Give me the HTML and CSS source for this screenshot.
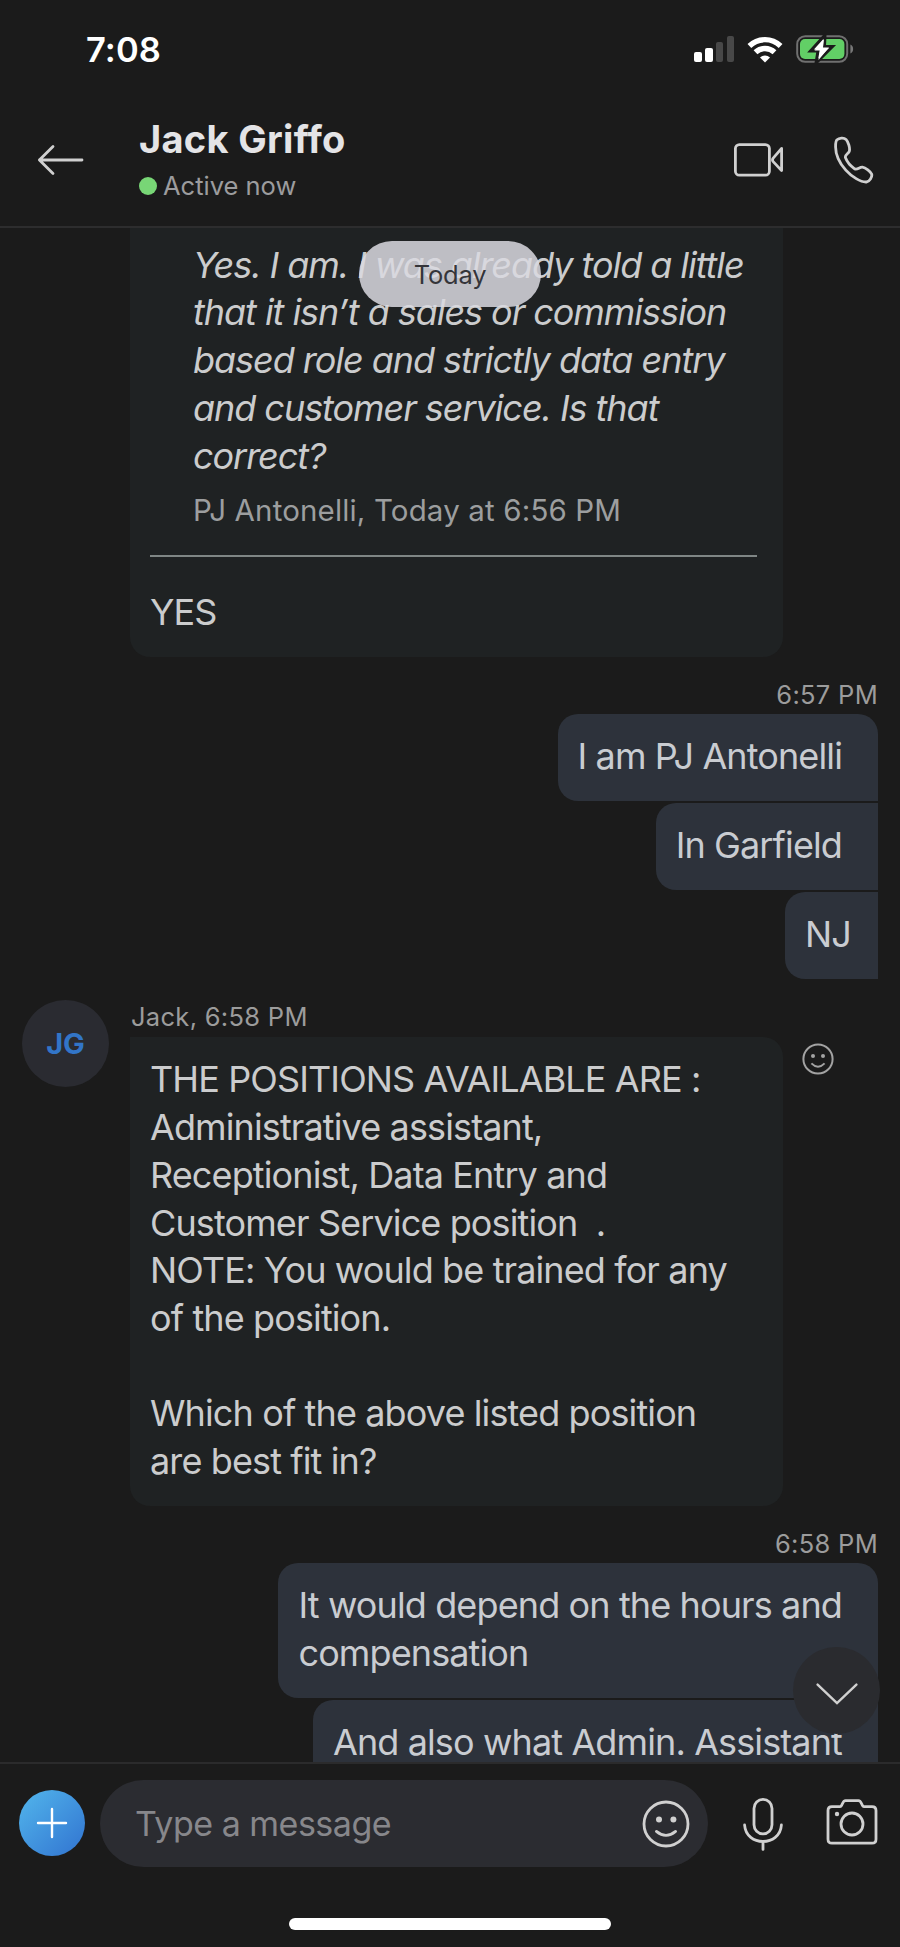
FILE: index.html
```html
<!DOCTYPE html>
<html lang="en">
<head>
    <meta charset="UTF-8">
    <meta name="viewport" content="width=device-width, initial-scale=1.0">
    <title>Jack Griffo</title>
    <link rel="stylesheet" href="styles.css">
</head>
<body>
    <div class="phone">
        <header class="header">
            <div class="status-bar">
                <span class="clock">7:08</span>
                <svg class="signal" width="41" height="26" viewBox="0 0 41 26">
                    <rect x="0" y="16" width="8" height="10" rx="2" fill="#fff"/>
                    <rect x="11" y="12" width="8" height="14" rx="2" fill="#fff"/>
                    <rect x="22" y="6" width="7" height="20" rx="2" fill="#484848"/>
                    <rect x="33" y="0" width="7" height="26" rx="2" fill="#484848"/>
                </svg>
                <svg class="wifi" width="36" height="27" viewBox="0 0 36 27" fill="none" stroke="#fff" stroke-width="5.4">
                    <path d="M2.4 10A22.4 22.4 0 0 1 33.6 10"/>
                    <path d="M8.5 16.3A13.6 13.6 0 0 1 27.5 16.3"/>
                    <path d="M13 21.5A7.3 7.3 0 0 1 23 21.5L18 26.4Z" fill="#fff" stroke="none"/>
                </svg>
                <svg class="battery" width="58" height="28" viewBox="0 0 58 28">
                    <rect x="1.2" y="1.2" width="50" height="25.6" rx="8" fill="none" stroke="#707070" stroke-width="2"/>
                    <rect x="4" y="4" width="44.4" height="20" rx="5" fill="#62cf66"/>
                    <path d="M54.4 9.5C58 11 58 17 54.4 18.5Z" fill="#777"/>
                    <path d="M29 0L14.5 16H22L20 28L36.5 11.5H28.5Z" fill="#fff" stroke="#1b1b1b" stroke-width="3"/>
                    <path d="M28 4L18.5 15.4H24.2L22.5 25L33 12.6H27Z" fill="#fff"/>
                </svg>
            </div>
            <div class="title-bar">
                <svg class="back" width="48" height="32" viewBox="0 0 48 32" fill="none" stroke="#d0d0d0" stroke-width="2.8" stroke-linecap="round" stroke-linejoin="round">
                    <path d="M45 16H2.4M16 2.4L2.4 16L16 29.6"/>
                </svg>
                <div class="contact">
                    <h1>Jack Griffo</h1>
                    <p><i class="dot"></i>Active now</p>
                </div>
                <svg class="video" width="50" height="34" viewBox="0 0 50 34" fill="none" stroke="#d0d0d0" stroke-width="2.8" stroke-linejoin="round">
                    <rect x="1.4" y="1.6" width="34" height="30.6" rx="4"/>
                    <path d="M47.6 5.4V27.6L39.2 18.6Q37.8 17 39.2 15.2Z"/>
                </svg>
                <svg class="call" width="40" height="48" viewBox="0 0 40 48" fill="none" stroke="#d0d0d0" stroke-width="2.8" stroke-linejoin="round">
                    <path d="M3 3.8C5 2 9.8 1.2 12 3.4C14.6 6.2 16 12 15.4 15C15 17.6 10.6 18.6 11.4 21.6C12.8 25.4 17 30.4 20.6 32.8C23.2 34.4 25.4 31 28.4 31.2C31.6 31.6 36.6 35.4 37.6 38C38.6 41 35.4 45.6 32.4 46C27 46.4 17.4 40.6 11.8 34.2C5.2 26.6 1.4 17.6 1.6 10.2C1.6 7.2 1.6 5 3 3.8Z"/>
                </svg>
            </div>
        </header>

        <main class="chat">
            <div class="bubble received first">
                <blockquote>
                    Yes. I am. I was already told a little<br>
                    that it isn’t a sales or commission<br>
                    based role and strictly data entry<br>
                    and customer service. Is that<br>
                    correct?
                    <cite>PJ Antonelli, Today at 6:56 PM</cite>
                </blockquote>
                <hr>
                YES
            </div>

            <div class="sent-group">
                <time>6:57 PM</time>
                <div class="bubble sent">I am PJ Antonelli</div>
                <div class="bubble sent">In Garfield</div>
                <div class="bubble sent short">NJ</div>
            </div>

            <div class="received-group">
                <div class="avatar">JG</div>
                <div class="message">
                    <time>Jack, 6:58 PM</time>
                    <div class="bubble received">
                        THE POSITIONS AVAILABLE ARE :<br>
                        Administrative assistant,<br>
                        Receptionist, Data Entry and<br>
                        Customer Service position&nbsp; .<br>
                        NOTE: You would be trained for any<br>
                        of the position.<br>
                        <br>
                        Which of the above listed position<br>
                        are best fit in?
                    </div>
                </div>
                <svg class="react" width="32" height="32" viewBox="0 0 32 32" fill="none" stroke="#a3a3a3" stroke-width="2">
                    <circle cx="16" cy="16" r="14.6"/>
                    <path d="M9.4 20.4Q16 27 22.6 20.4"/>
                    <circle cx="11" cy="13" r="2" fill="#a3a3a3" stroke="none"/>
                    <circle cx="21" cy="13" r="2" fill="#a3a3a3" stroke="none"/>
                </svg>
            </div>

            <div class="sent-group">
                <time>6:58 PM</time>
                <div class="bubble sent">It would depend on the hours and<br>compensation</div>
                <div class="bubble sent">And also what Admin. Assistant</div>
            </div>

            <div class="day">Today</div>
            <button class="scroll-down" aria-label="Scroll to latest">
                <svg width="42" height="22" viewBox="0 0 42 22" fill="none" stroke="#d0d0d0" stroke-width="2.4" stroke-linecap="round">
                    <path d="M1.6 1.6L21 20L40.4 1.6"/>
                </svg>
            </button>
        </main>

        <footer class="composer">
            <button class="add" aria-label="Add">
                <svg width="32" height="32" viewBox="0 0 32 32" stroke="#fff" stroke-width="2.4" stroke-linecap="round">
                    <path d="M16 2V30M2 16H30"/>
                </svg>
            </button>
            <div class="field">
                <span>Type a message</span>
                <svg width="48" height="48" viewBox="0 0 48 48" fill="none" stroke="#d0d0d0" stroke-width="2.8" stroke-linecap="round">
                    <circle cx="24" cy="24" r="22"/>
                    <path d="M14.4 31.4Q24 39.4 33.6 31.4"/>
                    <circle cx="17" cy="19.6" r="3" fill="#d0d0d0" stroke="none"/>
                    <circle cx="31.4" cy="19.6" r="3" fill="#d0d0d0" stroke="none"/>
                </svg>
            </div>
            <svg class="mic" width="40" height="54" viewBox="0 0 40 54" fill="none" stroke="#d0d0d0" stroke-width="2.8" stroke-linecap="round">
                <rect x="11" y="2.4" width="18" height="34.4" rx="9"/>
                <path d="M1.6 28C3 50 37 50 38.4 28M20 45V52.4"/>
            </svg>
            <svg class="camera" width="52" height="46" viewBox="0 0 52 46" fill="none" stroke="#d0d0d0" stroke-width="2.8" stroke-linejoin="round">
                <path d="M6 7.6H14C16.6 7.6 16 1.6 19.6 1.6H32.4C36 1.6 35.4 7.6 38 7.6H46Q50 7.6 50 11.6V40.2Q50 44.2 46 44.2H6Q2 44.2 2 40.2V11.6Q2 7.6 6 7.6Z"/>
                <circle cx="26" cy="25" r="11"/>
                <circle cx="11" cy="15" r="2.2" fill="#d0d0d0" stroke="none"/>
            </svg>
            <div class="home-indicator"></div>
        </footer>
    </div>
</body>
</html>
```
FILE: styles.css
```css
* {
    box-sizing: border-box;
}
body {
    margin: 0;
    background: #1b1b1b;
    color: #cbcccd;
    font-family: Inter, "Liberation Sans", sans-serif;
}
h1, p, blockquote {
    margin: 0;
}
svg {
    display: block;
    flex-shrink: 0;
}
button {
    border: none;
    padding: 0;
    display: flex;
    align-items: center;
    justify-content: center;
}
.phone {
    width: 900px;
    height: 1947px;
    display: flex;
    flex-direction: column;
    overflow: hidden;
}

/* header */
.header {
    height: 228px;
    flex-shrink: 0;
    border-bottom: 2px solid #2d2d2e;
}
.status-bar {
    display: flex;
    align-items: center;
    height: 98px;
    padding: 0 46px 0 86px;
}
.clock {
    flex: 1;
    color: #fff;
    font-size: 34.5px;
    font-weight: 600;
    letter-spacing: 0.1px;
}
.wifi {
    margin: 0 13px 0 12px;
}
.title-bar {
    display: flex;
    align-items: center;
    height: 124px;
    padding: 0 26px 0 37px;
}
.contact {
    flex: 1;
    margin: -4px 0 0 54px;
}
.contact h1 {
    color: #e4e4e6;
    font-size: 38px;
    line-height: 46px;
    letter-spacing: 0.3px;
}
.contact p {
    display: flex;
    align-items: center;
    color: #9c9c9e;
    font-size: 25.5px;
    line-height: 30px;
    margin-top: 9px;
}
.dot {
    width: 18px;
    height: 18px;
    margin-right: 6px;
    border-radius: 50%;
    background: #78d676;
}
.video {
    margin-right: 50px;
}

/* messages */
.chat {
    position: relative;
    flex: 1;
    overflow: hidden;
}
.bubble {
    font-size: 36px;
    line-height: 47.7px;
    letter-spacing: -0.88px;
    padding: 19px 20px 20.3px;
    border-radius: 20px;
    white-space: nowrap;
}
.received {
    width: 653px;
    background: #1f2223;
    border-top-left-radius: 0;
}
.first {
    margin-left: 130px;
    padding-top: 13.7px;
    border-top-right-radius: 0;
}
blockquote {
    margin-left: 43px;
    font-style: italic;
    letter-spacing: -1.05px;
}
cite {
    display: block;
    margin-top: 12px;
    color: #9c9e9f;
    font-size: 29.5px;
    font-style: normal;
    line-height: 36px;
    letter-spacing: 0.15px;
}
hr {
    height: 2px;
    margin: 26.7px 6px 32px 0;
    border: none;
    background: #7f8685;
}
time {
    display: block;
    color: #9c9c9c;
    font-size: 25.5px;
    line-height: 30px;
    letter-spacing: 0.3px;
}
.sent-group {
    display: flex;
    flex-direction: column;
    align-items: flex-end;
    gap: 2px;
    padding: 22.8px 22px 0 0;
}
.sent-group time {
    margin-bottom: 2.3px;
}
.sent {
    color: #c9ccd1;
    background: #2d323b;
    padding-right: 36px;
    border-radius: 20px 0 0 20px;
}
.sent-group time + .sent {
    border-top-right-radius: 20px;
}
.short {
    padding-right: 27px;
}
.received-group {
    display: flex;
    margin-top: 21px;
    padding-left: 22px;
}
.avatar {
    width: 87px;
    height: 87px;
    margin-right: 21px;
    border-radius: 50%;
    background: #2a2b31;
    color: #3275c8;
    font-size: 29px;
    font-weight: 700;
    line-height: 87px;
    text-align: center;
}
.message time {
    margin: 1.7px 0 5.8px 1px;
}
.react {
    margin: 43px 0 0 19px;
}
.day {
    position: absolute;
    top: 13px;
    left: 359px;
    width: 182px;
    height: 66px;
    border-radius: 33px;
    background: rgba(218, 217, 224, 0.85);
    color: #35353a;
    font-size: 25.5px;
    line-height: 68px;
    letter-spacing: -0.2px;
    text-align: center;
}
.scroll-down {
    position: absolute;
    right: 20px;
    bottom: 28px;
    width: 87px;
    height: 87px;
    padding-top: 6px;
    border-radius: 50%;
    background: #2a2b2f;
}

/* composer */
.composer {
    display: flex;
    flex-wrap: wrap;
    align-content: flex-start;
    align-items: center;
    flex-shrink: 0;
    height: 185px;
    padding: 16px 22px 0 19px;
    border-top: 2px solid #2b2b2c;
}
.add {
    width: 66px;
    height: 66px;
    margin-top: -1px;
    border-radius: 50%;
    background: linear-gradient(135deg, #52b6ec, #3173d0);
}
.field {
    display: flex;
    align-items: center;
    justify-content: space-between;
    width: 608px;
    height: 87px;
    margin-left: 15px;
    padding: 0 18px 0 35px;
    border-radius: 44px;
    background: #2b2c31;
    color: #87878b;
    font-size: 34px;
    letter-spacing: -0.5px;
}
.mic {
    margin-left: 35px;
}
.camera {
    margin: -4px 0 0 43px;
}
.home-indicator {
    width: 322px;
    height: 12px;
    margin: 51px 0 0 270px;
    border-radius: 6px;
    background: #fff;
}
```
